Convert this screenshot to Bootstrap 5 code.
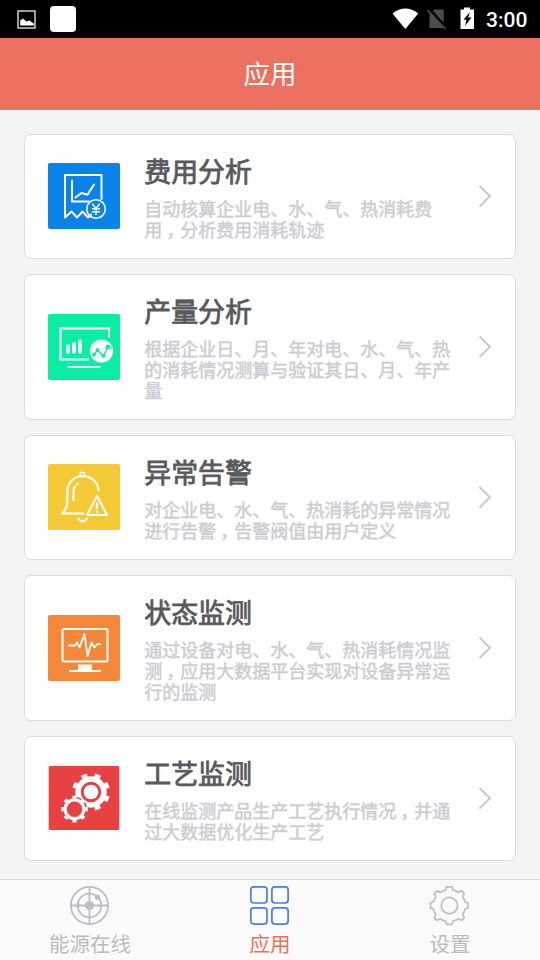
<!DOCTYPE html>
<html lang="zh-CN">
<head>
<meta charset="utf-8">
<meta name="viewport" content="width=device-width, initial-scale=1">
<title>应用</title>
<link href="https://cdn.jsdelivr.net/npm/bootstrap@5.3.0/dist/css/bootstrap.min.css" rel="stylesheet">
<style>
body{font-family:"Noto Sans CJK SC",sans-serif;background:#f4f4f4;height:960px;overflow:hidden}
svg{display:block;flex:none}
.status{height:38px;background:#000;padding-left:17px;padding-right:12px}
.notice{width:26px;height:26px;border-radius:4px;margin-left:14px}
.sim{margin-left:8px}
.battery{margin-left:13px;margin-bottom:2px}
.clock{width:42px;margin-left:11px;font:500 21px/38px Roboto,sans-serif;padding-top:2px}
.top-title{height:72px;background:#eb7060;font-size:26.5px;padding-bottom:2px}
.app-list{padding:24px 24px 0;gap:15px}
.app-item{border:1px solid #dcdcdc;border-radius:7px;padding:19px 23px 20px;height:125px}
.app-item.tall{height:146px;padding-bottom:19px}
.app-text{width:310px;margin:2px auto 0 24.3px}
.app-name{font-size:26.9px;line-height:30px;color:#58585e;-webkit-text-stroke:.8px #58585e;margin-bottom:12px}
.app-desc{font-size:18px;line-height:21px;color:#cccdd5;-webkit-text-stroke:.5px #cccdd5}
.comma{margin-left:4px;margin-right:-4px}
.tabs{height:81px;background:#fafafa;border-top:1px solid #d9d9d9;padding-top:6px}
.tab-icon{margin-right:2px}
.tab-label{font-size:20.5px;line-height:30px;color:#bcbcbf;margin-top:2px}
.tab-label.current{color:#eb7060}
</style>
<script src="https://cdn.jsdelivr.net/npm/bootstrap@5.3.0/dist/js/bootstrap.bundle.min.js"></script>
</head>
<body class="d-flex flex-column m-0">
<header>
  <div class="status d-flex align-items-center text-white">
    <svg width="19" height="19" viewBox="0 0 19 19"><rect x="1" y="1" width="17" height="17" fill="none" stroke="#ddd" stroke-width="1.4"/><path d="M3.2 15.5V10.500L6 8.500l3.200 3L12.500 10.500l4.300 3V15.500Z" fill="#fff"/></svg>
    <span class="notice bg-white"></span>
    <svg class="ms-auto" width="27" height="22" viewBox="0 0 27 22"><path d="M.5 5.500Q13.300-4.500 26.200 5.500L13.300 21Z" fill="#fff"/></svg>
    <svg class="sim" width="20" height="22" viewBox="0 0 20 22"><path d="M7 1.500h9.700V20H2.500V6Z" fill="#4c4c4c"/><path d="M1.500.500 19.500 20.500" stroke="#000" stroke-width="3.500"/><path d="M.500 2 18.500 21" stroke="#4c4c4c" stroke-width="1.700"/></svg>
    <svg class="battery" width="15" height="23" viewBox="0 0 15 23"><path d="M.500 2.500H4V.500h6V2.500h4V22H.500Z" fill="#fff"/><path d="M10 5 3.500 12.800h3L5 19l6.500-8.500H8.200Z" fill="#000"/></svg>
    <span class="clock">3:00</span>
  </div>
  <h1 class="top-title d-flex align-items-center justify-content-center text-white fw-normal m-0">应用</h1>
</header>

<main class="app-list d-flex flex-column flex-grow-1">
  <a class="app-item bg-white d-flex align-items-center text-decoration-none">
    <svg width="72" height="66" viewBox="0 0 72 66"><rect width="72" height="66" rx="2" fill="#0982ea"/><g fill="none" stroke="#fff" stroke-width="2" stroke-linejoin="round" stroke-linecap="round"><path d="M53.500 36V12H17V54.500L23.500 48.500 29 54.500 34.500 48.500 40 54.500 43 51.500"/><path d="M24 17.500V38.500H41"/><path d="M27.500 34.500 33.500 30l6 1.800L46 21.500"/><circle cx="48" cy="46" r="9.300" stroke-width="1.600"/><path d="M44.500 41 48 45.500 51.500 41M48 45.500V51.500M44.500 45.700h7M44.500 48.700h7" stroke-width="1.400"/></g></svg>
    <div class="app-text align-self-start"><h2 class="app-name fw-normal">费用分析</h2><p class="app-desc m-0">自动核算企业电、水、气、热消耗费<br>用<span class="comma">，</span>分析费用消耗轨迹</p></div>
    <svg width="14" height="24" viewBox="0 0 14 24"><path d="M1.500 2 12 12.300 1.500 22.600" fill="none" stroke="#c8c9d0" stroke-width="2"/></svg>
  </a>
  <a class="app-item tall bg-white d-flex align-items-center text-decoration-none">
    <svg width="72" height="66" viewBox="0 0 72 66"><rect width="72" height="66" rx="2" fill="#09eda5"/><g fill="none" stroke="#fff" stroke-width="2"><path d="M61 23.500V14.500H12.500V45.500H41"/><path d="M20.500 53H52" stroke-linecap="round"/><path d="M20 32v6M26 29.500V38M32 27v11" stroke-width="3.600" stroke-linecap="round"/></g><circle cx="53.500" cy="37" r="11.600" fill="#fff"/><path d="M46 40.500 49.500 36l6 5.800L60 33" fill="none" stroke="#09eda5" stroke-width="1.400"/><g fill="#09eda5"><circle cx="46" cy="40.500" r="1.900"/><circle cx="49.500" cy="36" r="1.900"/><circle cx="55.500" cy="41.800" r="2"/><circle cx="60" cy="33" r="2.500"/></g></svg>
    <div class="app-text align-self-start"><h2 class="app-name fw-normal">产量分析</h2><p class="app-desc m-0">根据企业日、月、年对电、水、气、热<br>的消耗情况测算与验证其日、月、年产<br>量</p></div>
    <svg width="14" height="24" viewBox="0 0 14 24"><path d="M1.500 1.500 12 11.700 1.500 22" fill="none" stroke="#c8c9d0" stroke-width="2"/></svg>
  </a>
  <a class="app-item bg-white d-flex align-items-center text-decoration-none">
    <svg width="72" height="66" viewBox="0 0 72 66"><rect width="72" height="66" rx="2" fill="#f4cb37"/><g fill="none" stroke="#fff" stroke-width="2" stroke-linecap="round" stroke-linejoin="round"><path d="M50.500 26.500C50 18 43 12 34.500 12 26 12 19.500 19 19.300 27V37C19.300 43 17.500 46 14.500 49.500H35.500"/><circle cx="34.500" cy="10.500" r="2.300" stroke-width="1.600"/><path d="M25.500 36V26.500Q26 23.500 27 22.500M29 20.500 30 19.500"/><path d="M30 54.500Q34.500 60.500 39 54.500"/><path d="M49 32 59 51H39Z"/><path d="M49 39.500V44" stroke-width="2.400"/></g><circle cx="49" cy="47.700" r="1.200" fill="#fff"/></svg>
    <div class="app-text align-self-start"><h2 class="app-name fw-normal">异常告警</h2><p class="app-desc m-0">对企业电、水、气、热消耗的异常情况<br>进行告警<span class="comma">，</span>告警阀值由用户定义</p></div>
    <svg width="14" height="24" viewBox="0 0 14 24"><path d="M1.500 2 12 12.300 1.500 22.600" fill="none" stroke="#c8c9d0" stroke-width="2"/></svg>
  </a>
  <a class="app-item tall bg-white d-flex align-items-center text-decoration-none">
    <svg width="72" height="66" viewBox="0 0 72 66"><rect width="72" height="66" rx="2" fill="#f58838"/><rect x="14.500" y="14" width="45" height="32.500" rx="1.500" fill="none" stroke="#fff" stroke-width="2"/><path d="M20.500 30.500H27L29 27.200 31.500 32.500 36.500 19 39.500 41 43.500 27.500 46.500 32.500 49.500 29H53" fill="none" stroke="#fff" stroke-width="1.800" stroke-linejoin="round"/><path d="M30 49.500H44V55H53V57H21V55H30Z" fill="#fff"/></svg>
    <div class="app-text align-self-start"><h2 class="app-name fw-normal">状态监测</h2><p class="app-desc m-0">通过设备对电、水、气、热消耗情况监<br>测<span class="comma">，</span>应用大数据平台实现对设备异常运<br>行的监测</p></div>
    <svg width="14" height="24" viewBox="0 0 14 24"><path d="M1.500 1.500 12 11.700 1.500 22" fill="none" stroke="#c8c9d0" stroke-width="2"/></svg>
  </a>
  <a class="app-item bg-white d-flex align-items-center text-decoration-none">
    <svg width="72" height="66" viewBox="0 0 72 66"><rect x=".700" y="1" width="70.600" height="64" rx="1.500" fill="#e74142"/>
      <g fill="none" stroke="#fff"><circle cx="43" cy="27" r="13" stroke-width="5.400"/><circle cx="43" cy="27" r="16.700" stroke-width="4.600" pathLength="80" stroke-dasharray="4.400 5.600" transform="rotate(12.600 43 27)"/></g><circle cx="43" cy="27" r="7.300" fill="#fff"/>
      <circle cx="26.500" cy="44.200" r="12.500" fill="#e74142"/>
      <g fill="none" stroke="#fff"><circle cx="26.500" cy="44.200" r="9.400" stroke-width="3.200"/><circle cx="26.500" cy="44.200" r="11.700" stroke-width="3.200" pathLength="80" stroke-dasharray="4.400 5.600" transform="rotate(-9.900 26.500 44.200)"/></g></svg>
    <div class="app-text align-self-start"><h2 class="app-name fw-normal">工艺监测</h2><p class="app-desc m-0">在线监测产品生产工艺执行情况<span class="comma">，</span>并通<br>过大数据优化生产工艺</p></div>
    <svg width="14" height="24" viewBox="0 0 14 24"><path d="M1.500 2 12 12.300 1.500 22.600" fill="none" stroke="#c8c9d0" stroke-width="2"/></svg>
  </a>
</main>

<nav class="tabs d-flex">
  <a class="col-4 d-flex flex-column align-items-center text-decoration-none">
    <svg class="tab-icon" width="40" height="40" viewBox="0 0 40 40"><g fill="none" stroke="#bdbdc9" stroke-width="1.800"><circle cx="20.500" cy="19.500" r="18.600"/><circle cx="20.500" cy="19.500" r="11.800"/><path d="M20.500 .500V38.500M1.500 19.500H39.500"/></g><g fill="#bdbdc9"><circle cx="20.500" cy="19.500" r="4.600"/><circle cx="28.500" cy="11.200" r="2.700"/><circle cx="8.800" cy="19.500" r="2.300"/></g></svg>
    <span class="tab-label">能源在线</span>
  </a>
  <a class="col-4 d-flex flex-column align-items-center text-decoration-none">
    <svg class="tab-icon" width="40" height="40" viewBox="0 0 40 40"><g fill="none" stroke="#4c7ddd" stroke-width="1.700"><rect x="1.800" y=".800" width="16.200" height="16.200" rx="3"/><rect x="22.900" y=".800" width="16.200" height="16.200" rx="3"/><rect x="1.800" y="21.900" width="16.200" height="16.200" rx="3"/><rect x="22.900" y="21.900" width="16.200" height="16.200" rx="3"/></g></svg>
    <span class="tab-label current">应用</span>
  </a>
  <a class="col-4 d-flex flex-column align-items-center text-decoration-none">
    <svg class="tab-icon" width="40" height="40" viewBox="0 0 40 40"><g fill="none" stroke="#bdbdc9" stroke-width="1.700" stroke-linejoin="round" transform="translate(.500 -.400)"><path d="M17 1.200H22.500L23.500 4.500Q27 5 28.500 6.800L32 5.300 34.700 8 33.200 11.500Q35 13.500 35.500 16.200L38.500 17.300V22.300L35.500 23.500Q35 26.500 33.200 28.500L34.700 32 32 34.700 28.500 33.200Q26.500 35 23.500 35.500L22.500 38.800H17L16 35.500Q13 35 11 33.200L7.500 34.700 4.800 32 6.300 28.500Q4.500 26.500 4 23.500L1 22.300V17.300L4 16.200Q4.500 13.500 6.300 11.500L4.800 8 7.500 5.300 11 6.800Q13 5 16 4.500Z"/><circle cx="19.900" cy="20" r="8.200"/></g></svg>
    <span class="tab-label">设置</span>
  </a>
</nav>
</body>
</html>
